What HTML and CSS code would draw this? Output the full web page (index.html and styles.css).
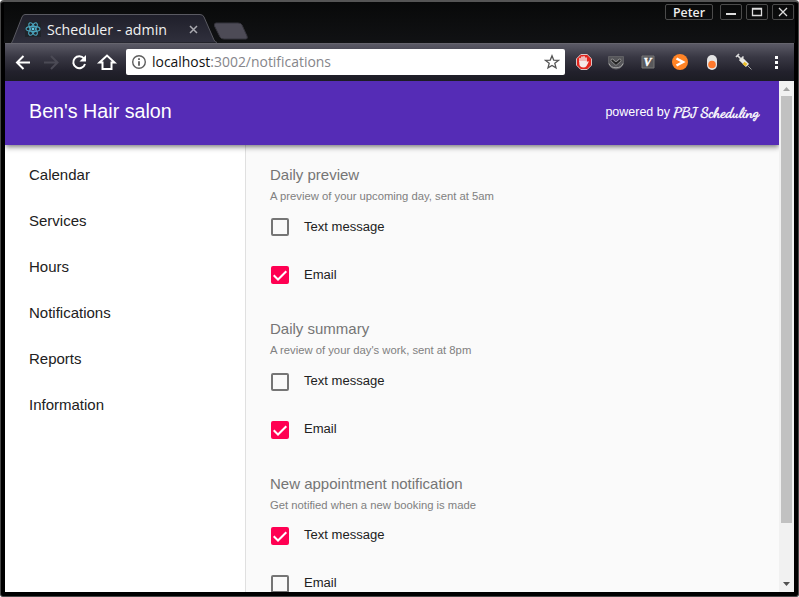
FILE: index.html
```html
<!DOCTYPE html>
<html lang="en">
<head>
<meta charset="utf-8">
<title>Scheduler - admin</title>
<link rel="stylesheet" href="styles.css">
</head>
<body>
<div class="window">
  <div class="titlebar">
    <div class="tabs">
      <div class="tab">
        <svg class="tab-shape" width="208" height="29" viewBox="0 0 208 29"><defs><linearGradient id="tg" x1="0" y1="0" x2="0" y2="1"><stop offset="0" stop-color="#1f1f2a"/><stop offset="1" stop-color="#30303d"/></linearGradient></defs><path d="M0.500 29 2 26 11 3Q12 .5 14 .5H189Q192 .5 193 3L203 26Q204 28 206 28.500" fill="url(#tg)" stroke="#5a5a62"/></svg>
        <svg class="react" width="16" height="16" viewBox="0 0 16 16"><path fill="#20242a" d="M0 0h16v16H0z"/><g fill="none" stroke="#4ba5bd" stroke-width="1.1"><ellipse cx="8" cy="8" rx="7" ry="2.6"/><ellipse cx="8" cy="8" rx="7" ry="2.6" transform="rotate(60 8 8)"/><ellipse cx="8" cy="8" rx="7" ry="2.6" transform="rotate(120 8 8)"/></g><circle cx="8" cy="8" r="1.4" fill="#61cce6"/></svg>
        <svg class="tab-title" width="124" height="28"><text x="0" y="20" textLength="120" lengthAdjust="spacingAndGlyphs">Scheduler - admin</text></svg>
        <svg class="tab-close" width="9" height="9" viewBox="0 0 9 9"><path d="M1 1 8 8M8 1 1 8" stroke="#aaaab0" stroke-width="1.5"/></svg>
      </div>
      <svg class="new-tab" width="36" height="19" viewBox="0 0 36 19"><path d="M3 1H25Q28 1 29 3L34 14Q35 17 33 17H11Q8 17 7 15L1.500 4Q1 1 3 1Z" fill="#4d4b56" stroke="#35343c"/></svg>
    </div>
    <div class="controls">
      <div class="user"><svg width="38" height="20"><text x="3" y="15" textLength="32" lengthAdjust="spacingAndGlyphs">Peter</text></svg></div>
      <div class="ctl"><svg width="22" height="16"><path d="M6 10H16" stroke="#ddd" stroke-width="2"/></svg></div>
      <div class="ctl"><svg width="22" height="16"><path d="M6.500 4.500H15.500V11.500H6.500ZM6 5H16" fill="none" stroke="#ddd" stroke-width="1.300"/></svg></div>
      <div class="ctl"><svg width="22" height="16"><path d="M7 4 15 12M15 4 7 12" stroke="#ddd" stroke-width="1.300"/></svg></div>
    </div>
  </div>

  <div class="toolbar">
    <svg class="nav-icons" width="121" height="38" viewBox="0 0 121 38" fill="none" stroke="#fff" stroke-width="2">
      <path d="M25 18.500H12.500M18.500 12 12 18.500 18.500 25"/>
      <path d="M39 18.500H52M46 12 52.500 18.500 46 25" stroke="#4b4a55"/>
      <path d="M79 14.500A6 6 0 1 0 80 20"/><path d="M81 11V17.500H74.500Z" fill="#fff" stroke="none"/>
      <path d="M94.500 18.500 102 11.500 109.500 18.500H106.500V25H97.500V18.500Z"/>
    </svg>
    <div class="address">
      <svg width="16" height="16" viewBox="0 0 16 16"><circle cx="8" cy="8" r="6.300" fill="none" stroke="#5d5d5d" stroke-width="1.400"/><path d="M7.100 7.200H8.900V11.800H7.100ZM7.100 4.200H8.900V6H7.100Z" fill="#5d5d5d"/></svg>
      <svg class="url" width="182" height="22"><text x="0" y="16" textLength="179" lengthAdjust="spacingAndGlyphs"><tspan fill="#111">localhost</tspan><tspan fill="#85858a">:3002/notifications</tspan></text></svg>
      <svg class="star" width="16" height="16" viewBox="0 0 16 16"><path d="M8 1.800 9.700 6.100 14.400 6.400 10.800 9.300 12 13.900 8 11.400 4 13.900 5.200 9.300 1.600 6.400 6.300 6.100Z" fill="none" stroke="#555" stroke-width="1.300"/></svg>
    </div>
    <div class="extensions">
      <svg width="18" height="18" viewBox="0 0 18 18"><path d="M5.800 1.500H12.200L16.500 5.800V12.200L12.200 16.500H5.800L1.500 12.200V5.800Z" fill="#e2251d" stroke="#d9c5c5"/><path d="M5 8.500V5.500M7 8.500V4M9 8.500V3.700M11 9V5" stroke="#f5e9e9" stroke-width="1.500" stroke-linecap="round"/><path d="M4.300 8H11.700V9.500L13 8Q14.200 8.300 13.300 9.800L11.500 13Q10.500 14.500 8.500 14.500Q4.600 14.300 4.300 11Z" fill="#f5e9e9"/></svg>
      <svg width="18" height="18" viewBox="0 0 18 18"><path d="M1.500 3.500H16.500V9A7.500 7 0 0 1 1.500 9Z" fill="#56565a" stroke="#606064"/><path d="M2 10.500A7.300 6 0 0 0 16 10.500" fill="none" stroke="#aaa"/><path d="M5.200 7.300 9 10.700 12.800 7.300" fill="none" stroke="#999" stroke-width="3.200" stroke-linecap="round"/><path d="M5.200 7.300 9 10.700 12.800 7.300" fill="none" stroke="#222" stroke-width="1.800" stroke-linecap="round"/></svg>
      <svg width="18" height="18" viewBox="0 0 18 18"><path d="M3 3H15V15H3Z" fill="#58585b" stroke="#777"/><text class="v-mark" x="4.500" y="13">V</text></svg>
      <svg width="18" height="18" viewBox="0 0 18 18"><circle cx="9" cy="9" r="8" fill="#ff8426"/><path d="M5.500 5.500 12 9 5.500 12.500" fill="none" stroke="#fff" stroke-width="2.500"/></svg>
      <svg width="18" height="18" viewBox="0 0 18 18"><rect x="4" y="2" width="10" height="15" rx="5" fill="#e4e4e4"/><circle cx="9" cy="11.500" r="3.800" fill="#ff792d"/></svg>
      <svg width="18" height="18" viewBox="0 0 18 18"><path d="M1 4 4 1M2.500 2.500 6 6M4.500 7.500 8.500 3.500" stroke="#ddd" stroke-width="1.700"/><path d="M6 6 12.500 12.500" stroke="#e7e7e3" stroke-width="4.500"/><path d="M8.500 10 11.500 12" stroke="#e9bd28" stroke-width="3"/><path d="M12 12 16.500 16.500" stroke="#a2a2a2"/></svg>
      <svg width="18" height="18" viewBox="0 0 18 18" fill="#fff"><path d="M8 3h3v3H8zM8 8h3v3H8zM8 13h3v3H8z"/></svg>
    </div>
  </div>

  <div class="viewport">
    <div class="app">
      <header class="appbar">
        <h1>Ben's Hair salon</h1>
        <div class="powered"><span>powered by</span><svg width="90" height="26"><text class="brand" x="2" y="17" textLength="86" lengthAdjust="spacingAndGlyphs">PBJ Scheduling</text></svg></div>
      </header>
      <div class="body">
        <nav class="sidebar">
          <a>Calendar</a><a>Services</a><a>Hours</a><a>Notifications</a><a>Reports</a><a>Information</a>
        </nav>
        <main class="content">
          <section>
            <h2>Daily preview</h2>
            <p>A preview of your upcoming day, sent at 5am</p>
            <div class="option"><span class="box"></span><span class="label">Text message</span></div>
            <div class="option"><span class="box checked"><svg width="18" height="18"><path d="M2.700 9.300 7 13.500 15.300 5.200"/></svg></span><span class="label">Email</span></div>
          </section>
          <section>
            <h2>Daily summary</h2>
            <p>A review of your day's work, sent at 8pm</p>
            <div class="option"><span class="box"></span><span class="label">Text message</span></div>
            <div class="option"><span class="box checked"><svg width="18" height="18"><path d="M2.700 9.300 7 13.500 15.300 5.200"/></svg></span><span class="label">Email</span></div>
          </section>
          <section>
            <h2>New appointment notification</h2>
            <p>Get notified when a new booking is made</p>
            <div class="option"><span class="box checked"><svg width="18" height="18"><path d="M2.700 9.300 7 13.500 15.300 5.200"/></svg></span><span class="label">Text message</span></div>
            <div class="option"><span class="box"></span><span class="label">Email</span></div>
          </section>
        </main>
      </div>
    </div>
    <div class="scrollbar">
      <svg width="15" height="15"><path d="M4 10 7.500 6 11 10Z" fill="#a3a3a3"/></svg>
      <div class="thumb"></div>
      <svg width="15" height="15"><path d="M4 5 7.500 9 11 5Z" fill="#505050"/></svg>
    </div>
  </div>
</div>
</body>
</html>
```

FILE: styles.css
```css
* { box-sizing: border-box; }
body { margin: 0; background: #fff; font-family: "Liberation Sans", Arial, sans-serif; overflow: hidden; }
svg { display: block; flex: none; }
.window {
  width: 799px; height: 597px; padding: 0 3px 3px; overflow: hidden;
  display: flex; flex-direction: column;
  background: #000; border: 1px solid #484848; border-top: 2px solid #555;
  border-radius: 4px 4px 3px 3px;
}
.titlebar { height: 41px; flex: none; display: flex; justify-content: space-between; background: linear-gradient(#080909, #111214); font-family: "Open Sans", "Noto Sans", sans-serif; }
.tabs { display: flex; align-items: flex-end; padding-left: 7px; }
.tab { width: 208px; height: 29px; display: flex; align-items: center; position: relative; padding-left: 14px; }
.tab-shape { position: absolute; left: 0; top: 0; }
.react, .tab-title, .tab-close { position: relative; }
.tab-title { margin: 0 18px 0 6px; font-size: 15px; fill: #f1f1f1; }
.tab-close { margin-top: 2px; }
.new-tab { margin: 0 0 2px -6px; }
.controls { display: flex; gap: 4px; padding: 2px 1px 0 0; }
.user, .ctl { height: 16px; border: 1px solid #4b4b4b; border-radius: 2px; display: flex; align-items: center; justify-content: center; }
.user { width: 48px; margin-right: 3px; font-size: 13px; font-weight: 600; fill: #eee; }
.ctl { width: 22px; }

.toolbar { height: 38px; flex: none; margin: 0 1px; display: flex; align-items: center; background: linear-gradient(#5b5a66, #393844 35%, #22212c 75%, #1c1c24); border-top: 1px solid #66656e; }
.address { width: 439px; height: 26px; margin-bottom: 1px; border-radius: 2px; background: #fff; display: flex; align-items: center; padding: 0 5px; }
.url { margin-left: 5px; font: 14px "Open Sans", "Noto Sans", sans-serif; }
.star { margin-left: auto; }
.extensions { display: flex; gap: 14px; padding: 0 0 2px 10px; }
.v-mark { font: italic bold 12px "Liberation Serif", serif; fill: #fff; stroke: #fff; stroke-width: .4px; }

.viewport { height: 511px; flex: none; margin: 0 1px; display: flex; overflow: hidden; }
.app { flex: 1; display: flex; flex-direction: column; background: #fafafa; overflow: hidden; }
.appbar { height: 64px; flex: none; padding: 0 18px 0 24px; display: flex; justify-content: space-between; align-items: center; color: #fff; background: #552cb6; box-shadow: 0 2px 4px -1px rgba(0,0,0,.3), 0 4px 5px rgba(0,0,0,.14), 0 1px 6px rgba(0,0,0,.2); position: relative; z-index: 1; }
h1 { margin: 0 0 3px; font-size: 19.700px; font-weight: 400; }
.powered { display: flex; align-items: center; gap: 1px; font-size: 12.500px; }
.powered span { padding-bottom: 2px; }
.brand { font: bold 15px "Dancing Script", "Brush Script MT", cursive; fill: #fff; stroke: #fff; stroke-width: .3px; }
.body { flex: 1; min-height: 0; display: flex; }
.sidebar { width: 241px; flex: none; padding-top: 6px; background: #fff; border-right: 1px solid #e0e0e0; }
.sidebar a { display: flex; align-items: center; height: 46px; padding-left: 24px; font-size: 15px; color: #212121; }
.content { flex: 1; padding: 18.200px 24px 0; overflow: hidden; }
section { height: 154.250px; }
h2 { margin: 0; font-size: 15px; font-weight: 400; line-height: 24px; color: #757575; }
p { margin: 0 0 -1.800px; padding-top: 1px; font-size: 11.270px; line-height: 17px; color: #808080; }
.option { height: 48px; display: flex; align-items: center; font-size: 13.050px; color: #212121; }
.label { padding-bottom: 2px; }
.box { width: 18px; height: 18px; margin: 0 15px 0 1px; border: 2px solid #757575; border-radius: 2px; }
.checked { border: 0; background: #ff0052; }
.checked path { fill: none; stroke: #fff; stroke-width: 2; }
.scrollbar { width: 15px; flex: none; display: flex; flex-direction: column; background: #f1f1f1; }
.thumb { width: 11px; height: 427px; margin: 0 2px auto; background: #c1c1c1; }
```
